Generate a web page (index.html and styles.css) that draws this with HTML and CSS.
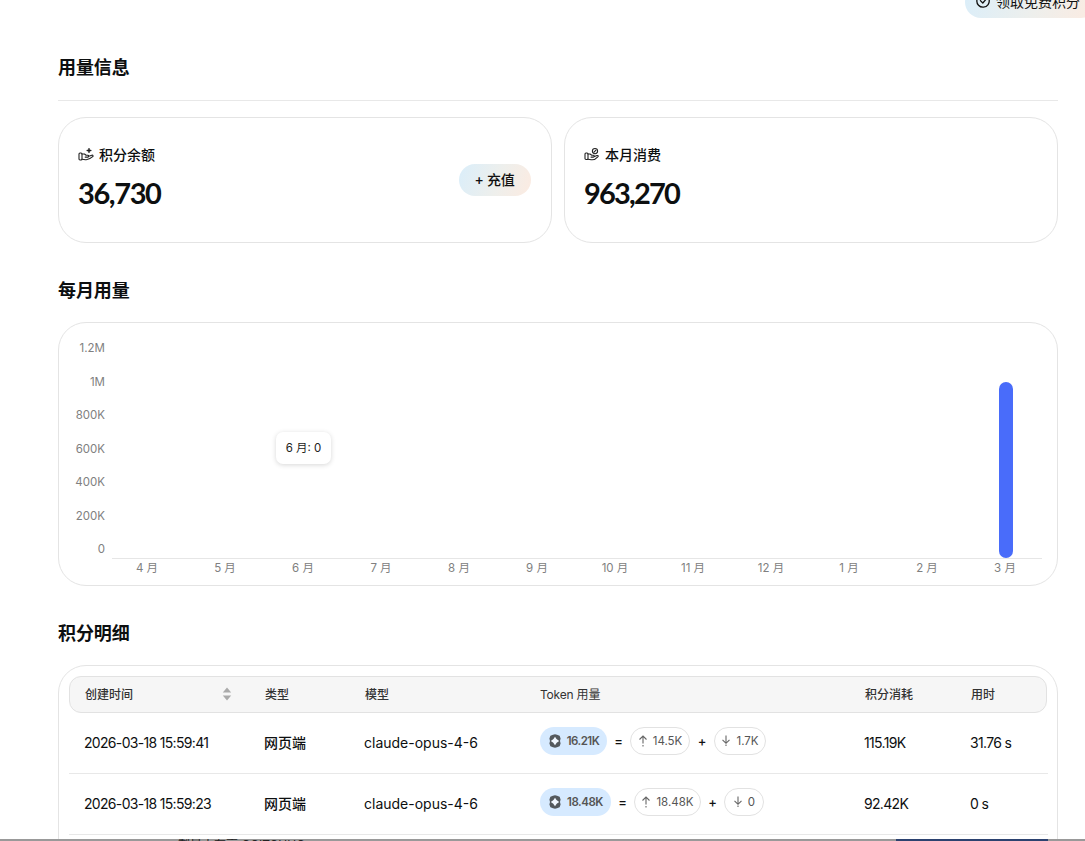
FILE: index.html
```html
<!DOCTYPE html>
<html lang="zh-CN">
<head>
	<meta charset="UTF-8">
	<title>用量信息</title>
	<link rel="stylesheet" href="styles.css">
</head>
<body>
	<div class="page">
		<div class="topbar">
			<button class="claim">
				<svg width="14" height="14" viewBox="0 0 14 14" fill="none" stroke="#111" stroke-width="1.3" stroke-linecap="round" stroke-linejoin="round"><path d="M9.2 1.2A6.2 6.2 0 1 0 13 5.3"/><path d="M4.4 6.6l2.4 2.4 5-5.8"/></svg>
				<span>领取免费积分</span>
			</button>
		</div>
		<div class="main">
			<h2 class="title first">用量信息</h2>
			<div class="cards">
				<div class="card">
					<div>
						<div class="label">
							<svg width="16" height="14" viewBox="0 0 16 14" fill="none" stroke="#222" stroke-width="1.1" stroke-linecap="round" stroke-linejoin="round"><rect x="1" y="6" width="3" height="7" rx="1"/><path d="M4 7h2.5l1.6 1.3h1.7c1.2 0 1.2 1.8 0 1.8H7.2M10.8 9.3l3-1.1c1.3-.3 1.7.9.8 1.5-1.8 1.7-4 3-6.3 3-1.6 0-2.7-.4-4.3-.5"/><path d="M11 1.7v3.6M9.2 3.5h3.6" stroke-width="1.5"/></svg>
							<span>积分余额</span>
						</div>
						<div class="amount">36,730</div>
					</div>
					<button class="recharge">+ 充值</button>
				</div>
				<div class="card">
					<div>
						<div class="label">
							<svg width="16" height="14" viewBox="0 0 16 14" fill="none" stroke="#222" stroke-width="1.1" stroke-linecap="round" stroke-linejoin="round"><rect x="1" y="6" width="3" height="6.5" rx="1"/><path d="M4 7h2l1.8 1.3h1.5c1.2 0 1.2 1.8 0 1.8H7M10.5 9.5l2.5-1c1.3-.3 1.7.8.8 1.4-1.5 1.7-3.5 2.9-5.6 2.9-1.5 0-2.6-.4-4.2-.6"/><circle cx="11" cy="4.1" r="2.6"/><path d="M10 5.1l2-2"/></svg>
							<span>本月消费</span>
						</div>
						<div class="amount spend">963,270</div>
					</div>
				</div>
			</div>

			<h2 class="title">每月用量</h2>
			<div class="chart">
				<div class="yaxis">
					<span>1.2M</span>
					<span>1M</span>
					<span>800K</span>
					<span>600K</span>
					<span>400K</span>
					<span>200K</span>
					<span>0</span>
				</div>
				<div class="plot">
					<div class="bars"><div class="bar" style="height: 176px"></div></div>
					<div class="xaxis">
						<span>4 月</span>
						<span>5 月</span>
						<span>6 月</span>
						<span>7 月</span>
						<span>8 月</span>
						<span>9 月</span>
						<span>10 月</span>
						<span>11 月</span>
						<span>12 月</span>
						<span>1 月</span>
						<span>2 月</span>
						<span>3 月</span>
					</div>
				</div>
				<div class="tooltip">6 月: 0</div>
			</div>

			<h2 class="title">积分明细</h2>
			<div class="detail">
				<div class="row head">
					<span class="sort">创建时间
						<svg width="10" height="14" viewBox="0 0 10 14" fill="#aaa"><path d="M5 .5l4.2 5H.8zM5 13.5l-4.2-5h8.4z"/></svg>
					</span>
					<span>类型</span>
					<span>模型</span>
					<span class="thin">Token 用量</span>
					<span>积分消耗</span>
					<span>用时</span>
				</div>
				<div class="row">
					<span class="num">2026-03-18 15:59:41</span>
					<span>网页端</span>
					<span class="model">claude-opus-4-6</span>
					<div class="tokens">
						<span class="pill total w67"><svg width="14" height="14" viewBox="0 0 14 14"><path fill="#54595d" d="M5 .8L7 .2l2 .6 2.600 1 1 2.600-.6 2.600.6 2.600-1 2.600-2.600 1-2 .6-2-.6-2.600-1-1-2.600.6-2.600-.6-2.600 1-2.600z"/><path fill="#f2f8ff" d="M7 2.800Q8.300 5.700 11.200 7 8.300 8.300 7 11.200 5.700 8.300 2.800 7 5.700 5.700 7 2.800z"/></svg>16.21K</span>
						<span class="op">=</span>
						<span class="pill w60"><svg width="10" height="12" viewBox="0 0 10 12" fill="none" stroke="#666" stroke-width="1.1"><path d="M5 1v7.5M1.5 4.5L5 1l3.5 3.5M5 10v1.5"/></svg>14.5K</span>
						<span class="op wide">+</span>
						<span class="pill w52"><svg width="10" height="12" viewBox="0 0 10 12" fill="none" stroke="#666" stroke-width="1.1"><path d="M5 .5v7.5M1.5 4.8L5 8.3l3.5-3.5M5 9.5V11"/></svg>1.7K</span>
					</div>
					<span class="num">115.19K</span>
					<span class="num">31.76 s</span>
				</div>
				<div class="row">
					<span class="num">2026-03-18 15:59:23</span>
					<span>网页端</span>
					<span class="model">claude-opus-4-6</span>
					<div class="tokens">
						<span class="pill total w71"><svg width="14" height="14" viewBox="0 0 14 14"><path fill="#54595d" d="M5 .8L7 .2l2 .6 2.600 1 1 2.600-.6 2.600.6 2.600-1 2.600-2.600 1-2 .6-2-.6-2.600-1-1-2.600.6-2.600-.6-2.600 1-2.600z"/><path fill="#f2f8ff" d="M7 2.800Q8.300 5.700 11.200 7 8.300 8.300 7 11.200 5.700 8.300 2.800 7 5.700 5.700 7 2.800z"/></svg>18.48K</span>
						<span class="op">=</span>
						<span class="pill w67"><svg width="10" height="12" viewBox="0 0 10 12" fill="none" stroke="#666" stroke-width="1.1"><path d="M5 1v7.5M1.5 4.5L5 1l3.5 3.5M5 10v1.5"/></svg>18.48K</span>
						<span class="op">+</span>
						<span class="pill w40"><svg width="10" height="12" viewBox="0 0 10 12" fill="none" stroke="#666" stroke-width="1.1"><path d="M5 .5v7.5M1.5 4.8L5 8.3l3.5-3.5M5 9.5V11"/></svg>0</span>
					</div>
					<span class="num">92.42K</span>
					<span class="num">0 s</span>
				</div>
			</div>
		</div>
		<div class="strip">
			<span class="strip-text">剩量大有高 CCITCUUC</span>
			<div class="strip-btn"></div>
		</div>
	</div>
</body>
</html>
```
FILE: styles.css
```css
*{
	box-sizing: border-box;
}
body{
	margin: 0;
	background: #fff;
	color: #0d0f10;
	font-family: Inter, "Noto Sans CJK SC", sans-serif;
	font-size: 14px;
}
.page{
	position: relative;
	width: 1085px;
	height: 841px;
	overflow: hidden;
}
button{
	border: 0;
	font-family: inherit;
	font-weight: 500;
	color: #111;
	background: linear-gradient(110deg, #daeefa 0%, #eeefec 55%, #fcebe1 100%);
}
.topbar{
	height: 18px;
	display: flex;
	justify-content: flex-end;
	align-items: flex-end;
}
.claim{
	flex: none;
	display: flex;
	align-items: center;
	gap: 6px;
	width: 132px;
	height: 32px;
	margin-right: -12px;
	padding: 0 0 2px 11px;
	border-radius: 16px;
	font-size: 14px;
	font-weight: 400;
	white-space: nowrap;
}
.main{
	width: 1000px;
	margin-left: 58px;
}
.title{
	margin: 0;
	height: 79px;
	padding-top: 34px;
	font-size: 18px;
	line-height: 28px;
	font-weight: 600;
	letter-spacing: -.1px;
}
.title.first{
	height: 83px;
	padding-top: 36px;
	border-bottom: 1px solid #e8e8e8;
}
.cards{
	display: flex;
	gap: 12px;
	margin-top: 16px;
}
.card{
	flex: 1;
	height: 126px;
	padding: 25px 20px 25px 19px;
	border: 1px solid #e4e4e4;
	border-radius: 28px;
	display: flex;
	justify-content: space-between;
}
.label{
	display: flex;
	align-items: center;
	gap: 5px;
	height: 22px;
	font-weight: 500;
}
.amount{
	margin-top: 8px;
	font-family: Lato, sans-serif;
	font-size: 29px;
	line-height: 40px;
	font-weight: 700;
	letter-spacing: -1.4px;
}
.amount.spend{
	letter-spacing: -1.8px;
}
.recharge{
	width: 72px;
	height: 32px;
	margin-top: 21px;
	padding: 0 1px 2px 0;
	border-radius: 16px;
	font-size: 14px;
	letter-spacing: -.3px;
}
.chart{
	position: relative;
	display: flex;
	height: 264px;
	padding: 15px 15px 0 0;
	border: 1px solid #e4e4e4;
	border-radius: 28px;
	color: #808080;
}
.yaxis{
	flex: none;
	width: 46px;
	height: 221px;
	display: flex;
	flex-direction: column;
	justify-content: space-between;
	text-align: right;
	font-size: 11.5px;
	line-height: 20px;
}
.plot{
	flex: none;
	width: 930px;
	margin-left: 7px;
}
.bars{
	height: 221px;
	display: flex;
	justify-content: flex-end;
	align-items: flex-end;
	padding-right: 29px;
	border-bottom: 1px solid #e6e6e6;
}
.bar{
	width: 14px;
	border-radius: 7px;
	background: #496cfa;
}
.xaxis{
	display: grid;
	grid-template-columns: repeat(12, 78px);
	margin-left: -4px;
	text-align: center;
	font-size: 11.5px;
	line-height: 19px;
}
.tooltip{
	position: absolute;
	left: 217px;
	top: 109px;
	width: 55px;
	height: 32px;
	border-radius: 7px;
	background: #fff;
	box-shadow: 0 1px 5px rgba(0,0,0,.16);
	color: #222;
	text-align: center;
	font-size: 11.5px;
	line-height: 32px;
}
.detail{
	height: 240px;
	padding: 10px 9px 0 10px;
	border: 1px solid #e4e4e4;
	border-radius: 28px;
}
.row{
	display: grid;
	grid-template-columns: 180px 100px 175px 325px 106px 1fr;
	align-items: center;
	height: 61px;
	padding: 0 0 2px 15px;
	border-bottom: 1px solid #e8e8e8;
	font-weight: 500;
}
.row.head{
	height: 37px;
	margin-right: 1px;
	border: 1px solid #e2e2e2;
	border-radius: 12px;
	background: #f6f6f6;
	color: #333;
	font-size: 12px;
}
.sort{
	display: flex;
	align-items: center;
	justify-content: space-between;
	padding-right: 33px;
}
.thin{
	font-weight: 400;
	letter-spacing: -.2px;
}
.num{
	font-weight: 400;
	letter-spacing: -.68px;
}
.model{
	font-weight: 400;
}
.tokens{
	display: flex;
	align-items: center;
	margin: -3px 0 0 1px;
	color: #555;
}
.pill{
	display: flex;
	align-items: center;
	justify-content: center;
	gap: 5px;
	height: 28px;
	border: 1px solid #e2e2e2;
	border-radius: 14px;
	font-size: 11.5px;
	font-weight: 400;
}
.total{
	border: 0;
	background: #d6eaff;
	font-weight: 600;
	letter-spacing: -.5px;
}
.op{
	width: 23px;
	text-align: center;
	font-size: 13px;
	color: #111;
}
.op.wide{
	width: 24px;
}
.w40{ width: 40px; }
.w52{ width: 52px; }
.w60{ width: 60px; }
.w67{ width: 67px; }
.w71{ width: 71px; }
/* bottom window edge */
.strip{
	position: absolute;
	left: 0;
	right: 0;
	bottom: 0;
	display: flex;
	height: 2px;
	padding-left: 178px;
	overflow: hidden;
	background: #999;
}
.strip-text{
	width: 718px;
	font-size: 12px;
	line-height: 12px;
	color: #222;
}
.strip-btn{
	width: 152px;
	height: 2px;
	background: #2c4270;
}
```
